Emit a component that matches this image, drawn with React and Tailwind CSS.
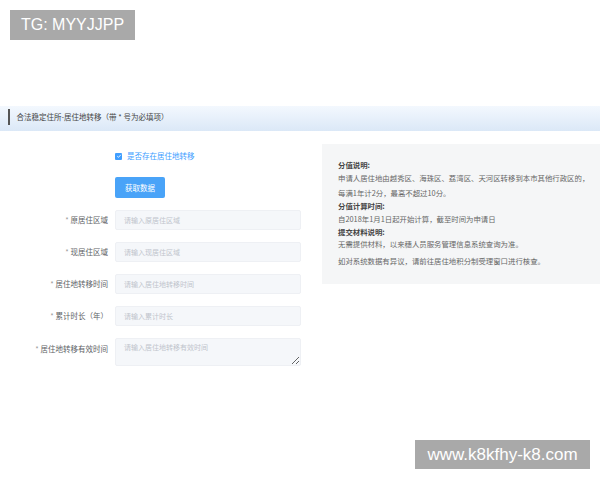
import { useState } from "react";

const fields = [
  { label: "原居住区域", placeholder: "请输入原居住区域" },
  { label: "现居住区域", placeholder: "请输入现居住区域" },
  { label: "居住地转移时间", placeholder: "请输入居住地转移时间" },
  { label: "累计时长（年）", placeholder: "请输入累计时长" },
];

export default function App() {
  const [checked, setChecked] = useState(true);

  return (
    <div
      className="relative w-[600px] h-[480px] bg-white overflow-hidden text-[#606266]"
      style={{ fontFamily: '"Noto Sans CJK SC", "Noto Sans", sans-serif' }}
    >
      {/* 顶部留白 */}
      <div className="h-[106px]" />

      {/* 标题栏 */}
      <div className="h-[25px] flex items-center pl-2 bg-gradient-to-b from-[#f3f8fe] to-[#dbe8f7]">
        <div className="h-[16px] w-[1.5px] bg-[#555] -mt-[4px]" />
        <span className="ml-[7px] -mt-[3px] text-[7.5px] text-[#444]">合法稳定住所-居住地转移（带 * 号为必填项）</span>
      </div>

      <div className="flex pt-[13px]">
        {/* 左侧表单 */}
        <div className="w-[322px] shrink-0 pt-[8px]">
          <label className="flex items-center ml-[115px] h-[8px] cursor-pointer">
            <span
              onClick={() => setChecked(!checked)}
              className={`w-[7px] h-[7px] rounded-[1px] flex items-center justify-center ${checked ? "bg-[#409eff]" : "bg-white border border-[#dcdfe6]"}`}
            >
              {checked && (
                <svg viewBox="0 0 10 10" className="w-[6px] h-[6px]">
                  <path d="M2 5.2 L4.2 7.2 L8 3" fill="none" stroke="white" strokeWidth="1.4" />
                </svg>
              )}
            </span>
            <span className="ml-[5px] text-[7.5px] text-[#409eff]">是否存在居住地转移</span>
          </label>

          <button className="ml-[115px] mt-[17px] w-[50px] h-[21px] rounded-[2px] bg-[#49a3f8] text-white text-[7.5px]">
            获取数据
          </button>

          <div className="mt-[12px] flex flex-col gap-[12px]">
            {fields.map((f) => (
              <div key={f.label} className="flex items-center">
                <div className="w-[108px] text-right text-[7.5px] text-[#606266]">
                  <span className="text-[#999]">* </span>{f.label}
                </div>
                <input
                  placeholder={f.placeholder}
                  className="ml-[7px] w-[186px] h-[20px] px-[8px] text-[7px] bg-[#f5f7fa] border border-[#eef0f4] rounded-[2px] outline-none placeholder:text-[#c0c4cc]"
                />
              </div>
            ))}
            <div className="flex items-start">
              <div className="w-[108px] pt-[5px] text-right text-[7.5px] text-[#606266]">
                <span className="text-[#999]">* </span>居住地转移有效时间
              </div>
              <textarea
                placeholder="请输入居住地转移有效时间"
                className="ml-[7px] w-[186px] h-[28px] px-[8px] py-[3px] text-[7px] bg-[#f5f7fa] border border-[#eef0f4] rounded-[2px] outline-none resize-y placeholder:text-[#c0c4cc]"
              />
            </div>
          </div>
        </div>

        {/* 右侧说明 */}
        <div className="flex-1 h-[140px] bg-[#f5f6f7] pl-[16px] pt-[15px] text-[7.4px] text-[#666] leading-[12px]">
          <p className="font-bold text-[#444]">分值说明:</p>
          <p className="mt-[1px]">申请人居住地由越秀区、海珠区、荔湾区、天河区转移到本市其他行政区的，</p>
          <p className="mt-[3px]">每满1年计2分，最高不超过10分。</p>
          <p className="mt-[1px] font-bold text-[#444]">分值计算时间:</p>
          <p className="mt-[1px]">自2018年1月1日起开始计算，截至时间为申请日</p>
          <p className="mt-[1px] font-bold text-[#444]">提交材料说明:</p>
          <p>无需提供材料，以来穗人员服务管理信息系统查询为准。</p>
          <p className="mt-[5px]">如对系统数据有异议，请前往居住地积分制受理窗口进行核查。</p>
        </div>
      </div>

      {/* 水印 */}
      <div className="absolute left-[10px] top-[10px] w-[125px] h-[30px] bg-[#a9a9a9] text-white text-[16px] flex items-center justify-center" style={{ fontFamily: '"Liberation Sans", Arial, sans-serif' }}>
        TG: MYYJJPP
      </div>
      <div className="absolute left-[415px] top-[440px] w-[175px] h-[29px] bg-[#a9a9a9] text-white text-[17px] flex items-center justify-center" style={{ fontFamily: '"Liberation Sans", Arial, sans-serif' }}>
        www.k8kfhy-k8.com
      </div>
    </div>
  );
}
